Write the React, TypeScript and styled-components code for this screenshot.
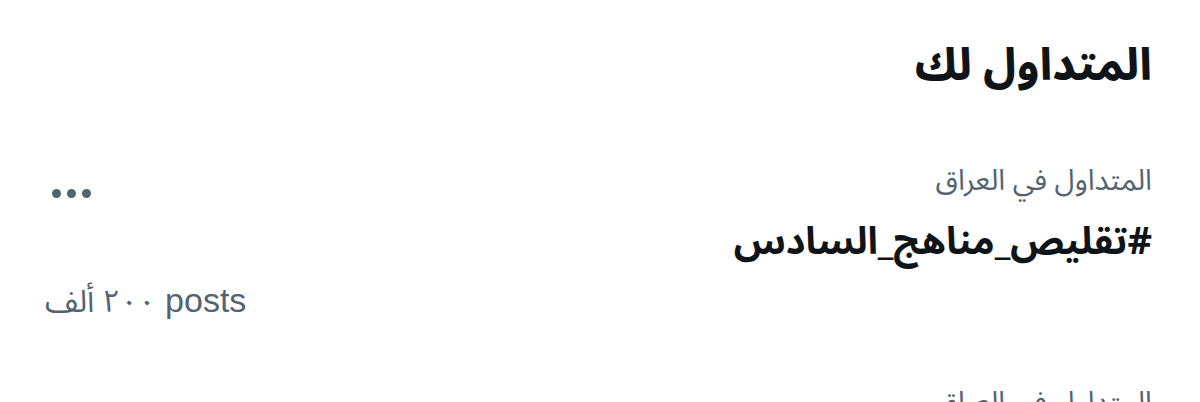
import React from "react";
import styled, { createGlobalStyle } from "styled-components";

const Global = createGlobalStyle`
  html, body { margin: 0; padding: 0; background: #ffffff; }
  body { font-family: "Noto Sans Arabic", "DejaVu Sans", sans-serif; }
`;

const Panel = styled.section`
  direction: rtl;
  width: 1200px;
  height: 402px;
  overflow: hidden;
  background: #ffffff;
`;

const Heading = styled.h2`
  margin: 0;
  padding: 38px 48px 10px 48px;
  font-size: 44px;
  line-height: 56px;
  font-weight: 800;
  color: #0f1419;
`;

const Trend = styled.article`
  display: flex;
  flex-direction: column;
  padding: 57px 48px 0 45px;
`;

const MetaRow = styled.div`
  display: flex;
  align-items: flex-end;
  justify-content: space-between;
`;

const Meta = styled.span`
  font-size: 29px;
  line-height: 40px;
  color: #536471;
`;

const More = styled.button`
  display: flex;
  gap: 6px;
  align-items: center;
  padding: 0;
  margin: 0 0 3px 7px;
  border: 0;
  background: transparent;
  cursor: pointer;
`;

const Dot = styled.span`
  width: 9px;
  height: 9px;
  border-radius: 50%;
  background: #536471;
`;

const Tag = styled.div`
  margin-top: 16px;
  font-size: 38px;
  line-height: 50px;
  font-weight: 700;
  color: #0f1419;
`;

const Count = styled.div`
  direction: ltr;
  text-align: left;
  margin-top: 9px;
  font-family: "Liberation Sans", "Noto Sans Arabic", sans-serif;
  font-size: 34px;
  line-height: 48px;
  color: #536471;
`;

const Amount = styled.span`
  font-family: "Noto Sans Arabic", sans-serif;
  font-size: 31px;
`;

const trends = [
  { place: "المتداول في العراق", tag: "#تقليص_مناهج_السادس", amount: "٢٠٠ ألف", unit: "posts" },
  { place: "المتداول في العراق", tag: "#العراق", amount: "", unit: "" },
];

export default function App() {
  return (
    <>
      <Global />
      <Panel>
        <Heading>المتداول لك</Heading>
        {trends.map((t, i) => (
          <Trend key={i}>
            <MetaRow>
              <Meta>{t.place}</Meta>
              <More aria-label="المزيد">
                <Dot />
                <Dot />
                <Dot />
              </More>
            </MetaRow>
            <Tag>{t.tag}</Tag>
            {t.amount && (
              <Count>
                <Amount>{t.amount}</Amount> {t.unit}
              </Count>
            )}
          </Trend>
        ))}
      </Panel>
    </>
  );
}
